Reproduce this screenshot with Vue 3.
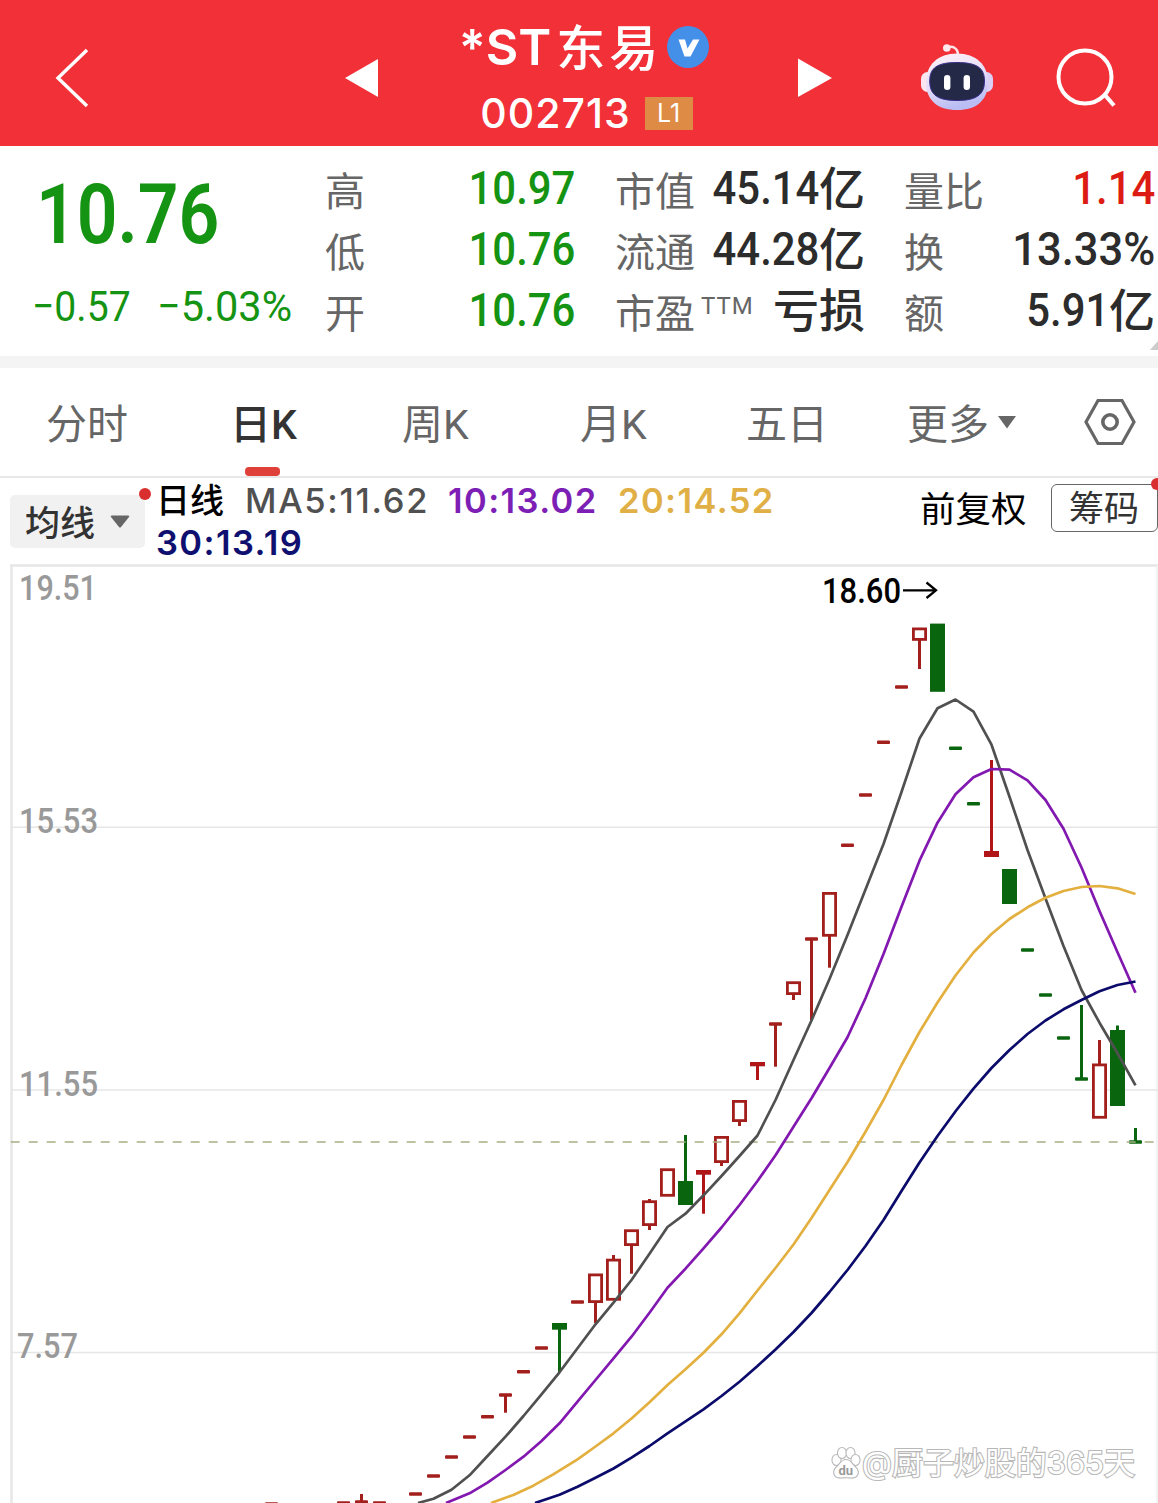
<template>
  <div class="page">
    <header class="header">
      <svg class="back" width="40" height="64" viewBox="0 0 40 64">
        <path d="M35 4 L6 32 L35 60" fill="none" stroke="#fff" stroke-width="3.4" />
      </svg>
      <svg class="prev" width="36" height="40" viewBox="0 0 36 40">
        <path d="M1 20 L34 1 V39 Z" fill="#fff" />
      </svg>
      <div class="title">
        <div class="name">
          <span class="name-latin">*ST</span>
          <span class="name-cjk">东易</span>
          <svg class="verified" width="42" height="42" viewBox="0 0 42 42">
            <circle cx="21" cy="21" r="21" fill="#448fe8" />
            <path d="M11.5 13.5 H18 L20.5 22.5 L26 13.5 H32.5 L23.5 30.5 H17.5 Z" fill="#fff" />
          </svg>
        </div>
        <div class="code">
          <span>002713</span>
          <span class="level">L1</span>
        </div>
      </div>
      <svg class="next" width="36" height="40" viewBox="0 0 36 40">
        <path d="M2 0.5 L36 20 L2 39 Z" fill="#fff" />
      </svg>
      <svg class="robot" width="78" height="72" viewBox="918 42 78 72">
        <defs>
          <linearGradient id="shell" x1="0" y1="0" x2="0.3" y2="1">
            <stop offset="0" stop-color="#fff3f6" />
            <stop offset="0.6" stop-color="#e3dbf8" />
            <stop offset="1" stop-color="#b9bdf3" />
          </linearGradient>
        </defs>
        <path d="M947 48 C952 45 958 48 958 55" fill="none" stroke="#fde3e6" stroke-width="2.6" />
        <circle cx="946.8" cy="48" r="3.8" fill="#fde9ee" />
        <rect x="921" y="72" width="14" height="20" rx="6.5" fill="#f9e6f1" />
        <rect x="979" y="72" width="14" height="20" rx="6.5" fill="#dccff4" />
        <path
          d="M957 53.5 C976 53.5 988 65 988 82 C988 100 977 110 957 110 C937 110 926 100 926 82 C926 65 938 53.5 957 53.5 Z"
          fill="url(#shell)"
        />
        <path
          d="M957 62.5 C977 62.5 984.5 68 984.5 81 C984.5 95 976 100.5 957 100.5 C938 100.5 929.7 95 929.7 81 C929.7 68 937 62.5 957 62.5 Z"
          fill="#242947"
          stroke="#3a2f8c"
          stroke-width="1"
        />
        <rect x="944" y="75" width="6.4" height="15" rx="3.2" fill="#fff" />
        <rect x="963.6" y="75" width="6.4" height="15" rx="3.2" fill="#fff" />
      </svg>
      <svg class="search" width="62" height="62" viewBox="0 0 62 62">
        <circle cx="30" cy="30" r="26.5" fill="none" stroke="#fff" stroke-width="4" />
        <path d="M49.5 47.5 L59 58.5" stroke="#fff" stroke-width="4.2" />
      </svg>
    </header>

    <section class="quote">
      <div class="price">
        <div class="last"><span class="num">10.76</span></div>
        <div class="change">
          <span class="num amount">−0.57</span>
          <span class="num percent">−5.03%</span>
        </div>
      </div>
      <div v-for="(column, i) in stats" :key="i" class="stat-column" :class="'col-' + i">
        <div v-for="item in column" :key="item.label" class="stat">
          <span class="label">{{ item.label }}<span v-if="item.sup" class="ttm">{{ item.sup }}</span></span>
          <span class="value" :class="item.tone">
            <span v-if="item.value" class="num">{{ item.value }}</span>
            <span v-if="item.unit" class="unit">{{ item.unit }}</span>
          </span>
        </div>
      </div>
      <i class="corner"></i>
    </section>

    <nav class="tabs">
      <span
        v-for="tab in tabs"
        :key="tab.id"
        class="tab"
        :class="[tab.id, { active: tab.id === active }]"
        @click="active = tab.id"
      >
        {{ tab.text }}
      </span>
      <svg class="more-arrow" width="20" height="14" viewBox="0 0 20 14">
        <path d="M1 1 H19 L10 13.5 Z" fill="#666" />
      </svg>
      <svg class="settings" width="52" height="48" viewBox="0 0 52 48">
        <path d="M14 2.5 H38 L50 24 L38 45.5 H14 L2 24 Z" fill="none" stroke="#666" stroke-width="3.2" />
        <circle cx="26" cy="24" r="7.2" fill="none" stroke="#666" stroke-width="3.6" />
      </svg>
    </nav>

    <section class="indicator">
      <div class="picker">
        <span>均线</span>
        <svg width="20" height="14" viewBox="0 0 20 14">
          <path d="M1 2 Q0 0.5 2 0.5 H18 Q20 0.5 19 2 L11 12 Q10 13 9 12 Z" fill="#666" />
        </svg>
        <i class="dot"></i>
      </div>
      <div class="ma">
        <div class="ma-line">
          <span class="ma-title">日线</span>
          <span class="ma5">MA5:11.62</span>
          <span class="ma10">10:13.02</span>
          <span class="ma20">20:14.52</span>
        </div>
        <div class="ma-line">
          <span class="ma30">30:13.19</span>
        </div>
      </div>
      <span class="adjust">前复权</span>
      <div class="chips">筹码<i class="dot"></i></div>
    </section>

    <svg class="chart" width="1158" height="940" viewBox="0 563 1158 940">
      <path d="M10 565.5 H1158" stroke="#e6e6e6" stroke-width="2.4" />
      <path d="M11.5 565 V1503" stroke="#e6e6e6" stroke-width="2.4" />
      <path d="M1157 565 V1503" stroke="#efefef" stroke-width="1.5" />
      <path v-for="y in gridLines" :key="y" :d="`M12 ${y} H1158`" stroke="#e6e6e6" stroke-width="1.4" />

      <g v-for="c in candles" :key="c.x">
        <path
          v-if="c.low"
          :d="`M${c.x} ${c.high} V${c.low}`"
          :stroke="colors[c.type]"
          stroke-width="3"
        />
        <rect
          v-if="c.type === 'up'"
          :x="c.x - 6.1"
          :y="c.top + 1.4"
          width="12.2"
          :height="Math.max(c.bottom - c.top - 2.8, 1)"
          fill="#fff"
          :stroke="colors.up"
          stroke-width="2.8"
        />
        <rect
          v-else-if="c.type === 'down' || c.type === 'upSolid'"
          :x="c.x - 7.5"
          :y="c.top"
          width="15"
          :height="c.bottom - c.top"
          :fill="colors[c.type]"
        />
        <rect
          v-else
          :x="c.x - 6.5"
          :y="c.top - 1.75"
          width="13"
          height="3.5"
          rx="1"
          :fill="colors[c.type]"
        />
      </g>

      <path d="M10.7 1142 H1158" stroke="#a9ad84" stroke-width="1.5" stroke-dasharray="9 9" />

      <polyline
        v-for="line in averages"
        :key="line.color"
        :points="line.points"
        fill="none"
        :stroke="line.color"
        stroke-width="2.7"
        stroke-linejoin="round"
      />

      <text
        v-for="label in axis"
        :key="label.text"
        :x="label.x"
        :y="label.y"
        :textLength="label.width"
        lengthAdjust="spacingAndGlyphs"
        class="axis"
      >{{ label.text }}</text>
      <text x="822" y="603" textLength="79" lengthAdjust="spacingAndGlyphs" class="peak">18.60</text>
      <path d="M903 590.3 H935 M926.5 582.5 L936 590.3 L926.5 598" fill="none" stroke="#000" stroke-width="2.3" />

      <g class="paw">
        <ellipse cx="836.5" cy="1460" rx="4" ry="5" />
        <ellipse cx="842" cy="1453" rx="4" ry="5" />
        <ellipse cx="850.5" cy="1453" rx="4" ry="5" />
        <ellipse cx="855.5" cy="1460" rx="4" ry="5" />
        <path d="M846 1460 C851 1460 852 1465 856 1468 C860 1473 857 1478 851 1477.5 C848 1477 844 1477 841 1477.5 C835 1478 832 1473 836 1468 C840 1465 841 1460 846 1460 Z" />
        <text x="838.5" y="1474.5" class="du">du</text>
      </g>
      <text x="862" y="1473.5" textLength="273" lengthAdjust="spacingAndGlyphs" class="watermark">@厨子炒股的365天</text>
    </svg>
  </div>
</template>

<script setup>
import { ref } from "vue";

const active = ref("day");

const tabs = [
  { id: "minute", text: "分时" },
  { id: "day", text: "日K" },
  { id: "week", text: "周K" },
  { id: "month", text: "月K" },
  { id: "five", text: "五日" },
  { id: "more", text: "更多" },
];

const stats = [
  [
    { label: "高", value: "10.97", tone: "green" },
    { label: "低", value: "10.76", tone: "green" },
    { label: "开", value: "10.76", tone: "green" },
  ],
  [
    { label: "市值", value: "45.14", unit: "亿" },
    { label: "流通", value: "44.28", unit: "亿" },
    { label: "市盈", sup: "TTM", unit: "亏损" },
  ],
  [
    { label: "量比", value: "1.14", tone: "red" },
    { label: "换", value: "13.33%", tone: "wide" },
    { label: "额", value: "5.91", unit: "亿" },
  ],
];

const colors = {
  up: "#a31f1c",
  upFlat: "#a31f1c",
  upSolid: "#b01518",
  down: "#0a650f",
  downFlat: "#0a650f",
};

const gridLines = [827.3, 1090, 1352.5];

const axis = [
  { text: "19.51", x: 19, y: 600, width: 78 },
  { text: "15.53", x: 19, y: 833, width: 79 },
  { text: "11.55", x: 19, y: 1095.5, width: 79 },
  { text: "7.57", x: 17, y: 1358, width: 61 },
];

// x, type, body top, body bottom, wick top, wick bottom
const candles = [
  [271.5, "upFlat", 1504],
  [343.5, "upFlat", 1503],
  [361.5, "upFlat", 1502, 1502, 1494, 1503],
  [379.5, "upFlat", 1503],
  [415.5, "upFlat", 1494],
  [433.5, "upFlat", 1476],
  [451.5, "upFlat", 1457],
  [469.5, "upFlat", 1437],
  [487.5, "upFlat", 1416.7],
  [505.5, "upFlat", 1395, 1395, 1395, 1412.7],
  [523.5, "upFlat", 1371.7],
  [541.5, "upFlat", 1348],
  [559.5, "down", 1323, 1329.7, 1325, 1372],
  [577.5, "upFlat", 1302],
  [595.5, "up", 1273.5, 1303, 1290, 1323],
  [613.5, "up", 1258.7, 1300.7, 1255, 1280],
  [631.5, "up", 1229.3, 1246, 1240, 1273.7],
  [649.5, "up", 1200.3, 1226, 1199, 1230],
  [667.5, "up", 1168.3, 1196.7],
  [685.5, "down", 1181, 1205, 1135, 1190],
  [703.5, "upSolid", 1170, 1174.7, 1172, 1213.7],
  [721.5, "up", 1136, 1163, 1150, 1166],
  [739.5, "up", 1100, 1122, 1110, 1126],
  [757.5, "upSolid", 1062, 1066.3, 1064, 1080],
  [775.5, "upFlat", 1024, 1024, 1024, 1066.7],
  [793.5, "up", 981.3, 995, 990, 1000],
  [811.5, "upFlat", 939, 939, 939, 1020],
  [829.5, "up", 892, 936.7, 930, 967.7],
  [847.5, "upFlat", 845.3],
  [865.5, "upFlat", 795],
  [883.5, "upFlat", 742.3],
  [901.5, "upFlat", 687],
  [919.5, "up", 627.5, 640.8, 635, 669],
  [937.5, "down", 623.6, 691.8],
  [955.5, "downFlat", 748.3],
  [973.5, "downFlat", 803.7],
  [991.5, "upSolid", 851, 857, 760, 853],
  [1009.5, "down", 869, 904],
  [1027.5, "downFlat", 950],
  [1045.5, "downFlat", 995],
  [1063.5, "downFlat", 1038],
  [1081.5, "downFlat", 1079, 1079, 1005, 1079],
  [1099.5, "up", 1063.5, 1118.7, 1040, 1080],
  [1117.5, "down", 1030, 1106, 1025.5, 1050],
  [1135.5, "downFlat", 1142, 1142, 1128, 1142],
].map(([x, type, top, bottom, high, low]) => ({ x, type, top, bottom, high, low }));

const averages = [
  {
    color: "#505050",
    points:
      "418,1503 433.5,1498.7 451.5,1489.7 469.5,1475.3 487.5,1456 505.5,1436.7 523.5,1416 541.5,1394.3 559.5,1372.3 577.5,1348.3 595.5,1324.3 613.5,1302.7 631.5,1280 649.5,1253.7 667.5,1227 685.5,1213.7 703.5,1195.3 721.5,1176 739.5,1156 757.5,1135.5 775.5,1100 793.5,1060 811.5,1020.5 829.5,979 847.5,935 865.5,889.5 883.5,844 901.5,792 919.5,738.5 937.5,708.3 955.5,699.5 973.5,711.7 991.5,744.7 1009.5,796.7 1027.5,850 1045.5,898.5 1063.5,946 1081.5,990 1099.5,1022.7 1117.5,1053.3 1135.5,1085.3",
  },
  {
    color: "#8218b0",
    points:
      "446,1503 469.5,1493.3 487.5,1482.7 505.5,1470 523.5,1456.7 541.5,1441 559.5,1423.3 577.5,1401.7 595.5,1380 613.5,1358.3 631.5,1336.7 649.5,1312.7 667.5,1287.7 685.5,1268.7 703.5,1248.3 721.5,1227.5 739.5,1205 757.5,1181 775.5,1155.3 793.5,1126.7 811.5,1098.3 829.5,1068 847.5,1037.3 865.5,998.3 883.5,954 901.5,906.7 919.5,860.7 937.5,822.7 955.5,794.3 973.5,777.3 991.5,769 1009.5,769.7 1027.5,780.3 1045.5,800 1063.5,828.7 1081.5,867.5 1099.5,911 1117.5,952.3 1135.5,992.7",
  },
  {
    color: "#e3b040",
    points:
      "491,1503 513.3,1495 533.3,1485.7 553.3,1474.3 577.5,1459.3 595.5,1446.5 613.5,1433.3 631.5,1418.5 649.5,1402.3 667.5,1385 685.5,1369.3 703.5,1352.8 721.5,1334.3 739.5,1313.3 757.5,1290.5 775.5,1268 793.5,1244.5 811.5,1218 829.5,1190 847.5,1162 865.5,1131.7 883.5,1100 901.5,1065 919.5,1032 937.5,1002.5 955.5,975.5 973.5,952.5 991.5,934 1009.5,919 1027.5,907.3 1045.5,897.7 1063.5,891 1081.5,887 1099.5,886 1117.5,888.3 1135.5,894",
  },
  {
    color: "#0b0b6b",
    points:
      "535,1503 559.5,1494.7 577.5,1486.7 595.5,1477.7 613.5,1468.5 631.5,1457.7 649.5,1446 667.5,1433.3 685.5,1421.3 703.5,1409.3 721.5,1396 739.5,1381.7 757.5,1366 775.5,1349.5 793.5,1332 811.5,1313 829.5,1292 847.5,1270 865.5,1246 883.5,1220 901.5,1191 919.5,1162.5 937.5,1136 956.5,1110 973.5,1088.7 991.5,1068 1009.5,1050 1027.5,1034 1045.5,1020.5 1063.5,1009.3 1081.5,1000 1099.5,991.3 1117.5,985 1135.5,981.5",
  },
];
</script>

<style>
body {
  background: #fff;
}
</style>

<style scoped>
.page {
  width: 1158px;
  height: 1503px;
  overflow: hidden;
  background: #fff;
  font-family: Roboto, "Noto Sans CJK SC", sans-serif;
}

.header {
  display: flex;
  align-items: center;
  height: 146px;
  box-sizing: border-box;
  padding-left: 52px;
  background: #f13038;
}

.header > svg {
  flex: none;
  margin-top: 10px;
}

.prev {
  margin-left: 252px;
}

.title {
  width: 413px;
  margin-right: 3px;
  color: #fff;
}

.name {
  display: flex;
  justify-content: center;
  align-items: center;
  height: 66px;
  margin: 14px 0 0 -5px;
  font-size: 50px;
  font-weight: 500;
}

.name-latin {
  margin-right: 5px;
  font-family: Inter, sans-serif;
  font-weight: 600;
}

.name-cjk {
  margin-bottom: 5px;
  font-size: 49px;
  letter-spacing: 4px;
}

.verified {
  margin-left: 5px;
}

.code {
  display: flex;
  justify-content: center;
  align-items: center;
  height: 66px;
  font-family: Inter, sans-serif;
  font-size: 41px;
  font-weight: 500;
  letter-spacing: 1px;
}

.level {
  width: 48px;
  height: 33px;
  margin-left: 14px;
  background: #de8b45;
  font-size: 25px;
  font-weight: 400;
  letter-spacing: 0;
  line-height: 33px;
  text-align: center;
}

.robot {
  margin-left: 86px;
}

.search {
  margin-left: 59px;
}

.quote {
  position: relative;
  display: flex;
  height: 210px;
  border-bottom: 12px solid #f4f4f4;
}

.num {
  display: inline-block;
  transform: scaleX(0.91);
  transform-origin: right;
}

.wide .num {
  transform: scaleX(0.945);
}

.price {
  width: 325px;
  color: #159312;
}

.price .num {
  transform-origin: left;
}

.last {
  height: 98px;
  padding: 20px 0 0 36px;
  font-size: 83px;
  font-weight: 600;
  line-height: 98px;
}

.last .num {
  transform: scaleX(0.86);
}

.change {
  display: flex;
  padding-left: 32px;
  margin-top: 14px;
  font-size: 43px;
  line-height: 56px;
  white-space: nowrap;
}

.amount {
  width: 125px;
}

.price .percent {
  transform: scaleX(0.965);
}

.stat-column {
  padding-top: 12px;
}

.col-0 {
  width: 250px;
}

.col-1 {
  width: 250px;
  margin-left: 40px;
}

.col-2 {
  width: 251px;
  margin-left: 39px;
}

.stat {
  display: flex;
  justify-content: space-between;
  align-items: center;
  height: 61px;
  white-space: nowrap;
}

.label {
  display: flex;
  padding-top: 7px;
  color: #666;
  font-size: 40px;
  line-height: 61px;
}

.ttm {
  margin: -8px 0 0 6px;
  font-size: 24px;
  letter-spacing: 1px;
}

.value {
  display: flex;
  color: #2c2c2c;
  font-size: 46px;
  font-weight: 500;
  line-height: 61px;
}

.value.green {
  color: #159312;
}

.value.red {
  color: #dc1c14;
}

.unit {
  line-height: 62px;
}

.corner {
  position: absolute;
  right: 0;
  bottom: 6px;
  border-left: 8px solid transparent;
  border-bottom: 9px solid #ccc;
}

.tabs {
  display: flex;
  align-items: center;
  height: 108px;
  border-bottom: 2px solid #e8e8e8;
  color: #666;
  font-size: 41px;
}

.tab {
  position: relative;
  height: 108px;
  line-height: 114px;
  box-sizing: border-box;
  white-space: nowrap;
}

.minute {
  width: 184px;
  padding-left: 46px;
}

.tab.day {
  width: 172px;
  margin-left: 46px;
}

.week {
  width: 178px;
}

.month {
  width: 166px;
}

.five {
  width: 161px;
}

.more {
  width: 90px;
}

.tab.active {
  color: #333;
  font-weight: 500;
}

.tab.active::after {
  content: "";
  position: absolute;
  left: 15px;
  bottom: 0;
  width: 35px;
  height: 9px;
  border-radius: 4px;
  background: #e0403a;
}

.settings {
  margin-left: 67px;
}

.indicator {
  display: flex;
  align-items: flex-start;
  height: 85px;
}

.picker {
  position: relative;
  display: flex;
  align-items: center;
  justify-content: space-between;
  width: 135px;
  height: 53px;
  margin: 17px 0 0 10px;
  padding: 0 15px;
  box-sizing: border-box;
  border-radius: 5px;
  background: #f1f1f1;
  color: #333;
  font-size: 35px;
  font-weight: 500;
  line-height: 50px;
}

.picker span {
  margin-top: 6px;
}

.dot {
  position: absolute;
  top: -7px;
  right: -6px;
  width: 12px;
  height: 12px;
  border-radius: 50%;
  background: #d9302f;
}

.ma {
  flex: none;
  width: 764px;
  margin-left: 11px;
  font-family: Inter, "Noto Sans CJK SC", sans-serif;
  font-size: 34.5px;
  font-weight: 600;
  letter-spacing: 1.4px;
}

.ma-line {
  display: flex;
  height: 42px;
  line-height: 46px;
}

.ma-title {
  width: 89px;
  color: #000;
  font-size: 34px;
  font-weight: 500;
  letter-spacing: 0;
}

.ma5 {
  width: 203px;
  color: #505050;
  font-weight: 500;
  letter-spacing: 1.7px;
}

.ma10 {
  width: 170px;
  color: #7d1fb5;
}

.ma20 {
  color: #e0af45;
}

.ma30 {
  color: #0f0f70;
}

.adjust {
  flex: none;
  margin-top: 7px;
  color: #000;
  font-size: 35.5px;
  line-height: 50px;
  white-space: nowrap;
}

.chips {
  position: relative;
  flex: none;
  width: 107px;
  height: 48px;
  margin: 6px 0 0 auto;
  padding-left: 17px;
  box-sizing: border-box;
  border: 1.5px solid #666;
  border-radius: 6px;
  color: #333;
  font-size: 35px;
  line-height: 49px;
  white-space: nowrap;
}

.chart {
  display: block;
}

.axis {
  fill: #999;
  font-size: 35px;
  font-weight: 500;
}

.peak {
  fill: #000;
  font-size: 35px;
  font-weight: 500;
}

.watermark,
.paw {
  fill: #fff;
  stroke: #b8b8b8;
  stroke-width: 2.2px;
  paint-order: stroke;
}

.watermark {
  font-family: Inter, "Noto Sans CJK SC", sans-serif;
  font-size: 31px;
}

.du {
  fill: #999;
  stroke: none;
  font-size: 13px;
  font-weight: 700;
}
</style>
